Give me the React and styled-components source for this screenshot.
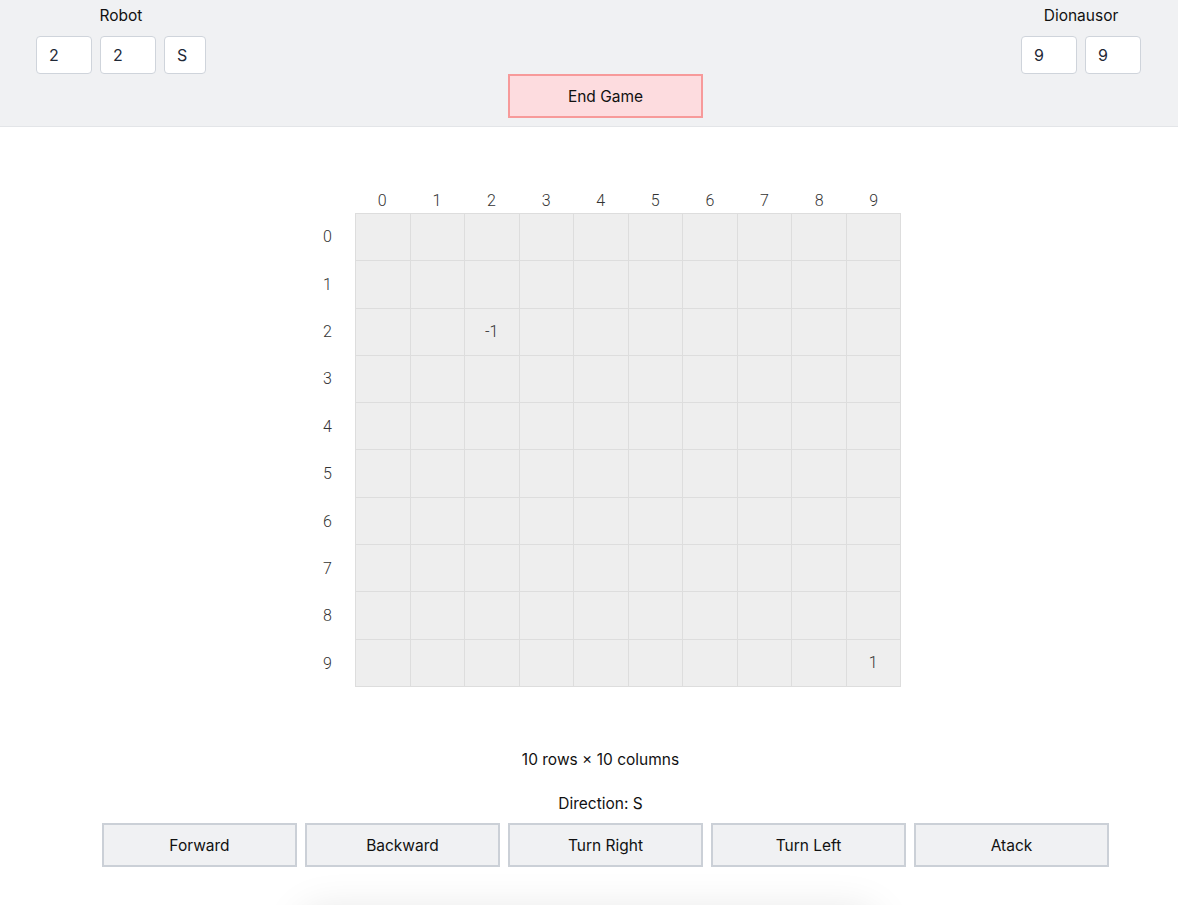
import React from 'react';
import styled, { createGlobalStyle } from 'styled-components';

const GlobalStyle = createGlobalStyle`
  html, body {
    margin: 0;
    padding: 0;
    background: #ffffff;
    font-family: Inter, "Liberation Sans", Arial, sans-serif;
    color: #111111;
    overflow: hidden;
  }
`;

const Header = styled.header`
  height: 126px;
  background: #f0f1f3;
  border-bottom: 1px solid #e3e5e8;
  box-sizing: content-box;
`;

const TopRow = styled.div`
  display: flex;
  justify-content: space-between;
  align-items: flex-start;
  padding: 0 37px 0 36px;
`;

const Player = styled.div`
  display: flex;
  flex-direction: column;
  align-items: center;
`;

const PlayerName = styled.div`
  height: 32px;
  line-height: 32px;
  font-size: 15.5px;
  margin-bottom: 4px;
`;

const Fields = styled.div`
  display: flex;
  gap: 8px;
`;

const Field = styled.input`
  box-sizing: border-box;
  width: ${p => (p.narrow ? '42px' : '56px')};
  height: 38px;
  padding: 0 12px;
  border: 1px solid #cfd4db;
  border-radius: 4px;
  background: #ffffff;
  font-family: inherit;
  font-size: 16px;
  color: #1f2937;
  outline: none;
`;

const EndRow = styled.div`
  display: flex;
  justify-content: center;
  padding-left: 33px;
`;

const EndButton = styled.button`
  box-sizing: border-box;
  width: 195px;
  height: 44px;
  background: #fddcdf;
  border: 2px solid #f79a9a;
  font-family: inherit;
  font-size: 15.5px;
  color: #111111;
  cursor: pointer;
`;

const Main = styled.main`
  display: flex;
  flex-direction: column;
  align-items: center;
  padding: 60px 0 0 23px;
`;

const Table = styled.div`
  display: grid;
  grid-template-columns: 55px 546px;
  grid-template-rows: 26px 474px;
  font-family: Roboto, "Liberation Sans", sans-serif;
  font-weight: 300;
  font-size: 16px;
  color: #333333;
`;

const ColHeads = styled.div`
  display: grid;
  grid-template-columns: repeat(10, 1fr);
  align-items: center;
  justify-items: center;
`;

const RowHeads = styled.div`
  display: grid;
  grid-template-rows: repeat(10, 1fr);
  align-items: center;
  justify-items: center;
`;

const Board = styled.div`
  display: grid;
  grid-template-columns: repeat(10, 1fr);
  grid-template-rows: repeat(10, 1fr);
  gap: 1px;
  background: #dddddd;
  border: 1px solid #dddddd;
  box-sizing: border-box;
`;

const Cell = styled.div`
  display: flex;
  align-items: center;
  justify-content: center;
  background: #eeeeee;
`;

const Caption = styled.div`
  font-size: 15.5px;
  line-height: 19px;
  margin-top: ${p => p.top}px;
`;

const Controls = styled.div`
  display: flex;
  justify-content: center;
  gap: 8px;
  margin-top: 10px;
  padding-left: 33px;
`;

const Control = styled.button`
  box-sizing: border-box;
  width: 195px;
  height: 44px;
  background: #f0f1f3;
  border: 2px solid #cbd0d7;
  font-family: Inter, "Liberation Sans", Arial, sans-serif;
  font-size: 15.5px;
  color: #111111;
  cursor: pointer;
`;

const Panel = styled.div`
  width: 580px;
  height: 200px;
  margin: 44px auto 0;
  background: #ffffff;
  border-radius: 24px;
  box-shadow: 0 -2px 40px rgba(0, 0, 0, 0.1);
`;

const SIZE = 10;
const values = { '2-2': '-1', '9-9': '1' };
const idx = Array.from({ length: SIZE }, (_, i) => i);

export default function App() {
  return (
    <>
      <GlobalStyle />
      <Header>
        <TopRow>
          <Player>
            <PlayerName>Robot</PlayerName>
            <Fields>
              <Field defaultValue="2" />
              <Field defaultValue="2" />
              <Field narrow defaultValue="S" />
            </Fields>
          </Player>
          <Player>
            <PlayerName>Dionausor</PlayerName>
            <Fields>
              <Field defaultValue="9" />
              <Field defaultValue="9" />
            </Fields>
          </Player>
        </TopRow>
        <EndRow>
          <EndButton>End Game</EndButton>
        </EndRow>
      </Header>
      <Main>
        <Table>
          <div />
          <ColHeads>
            {idx.map(c => (
              <span key={c}>{c}</span>
            ))}
          </ColHeads>
          <RowHeads>
            {idx.map(r => (
              <span key={r}>{r}</span>
            ))}
          </RowHeads>
          <Board>
            {idx.map(r =>
              idx.map(c => <Cell key={`${r}-${c}`}>{values[`${r}-${c}`] || ''}</Cell>)
            )}
          </Board>
        </Table>
        <Caption top={63}>10 rows × 10 columns</Caption>
        <Caption top={25}>Direction: S</Caption>
      </Main>
      <Controls>
        <Control>Forward</Control>
        <Control>Backward</Control>
        <Control>Turn Right</Control>
        <Control>Turn Left</Control>
        <Control>Atack</Control>
      </Controls>
      <Panel />
    </>
  );
}
